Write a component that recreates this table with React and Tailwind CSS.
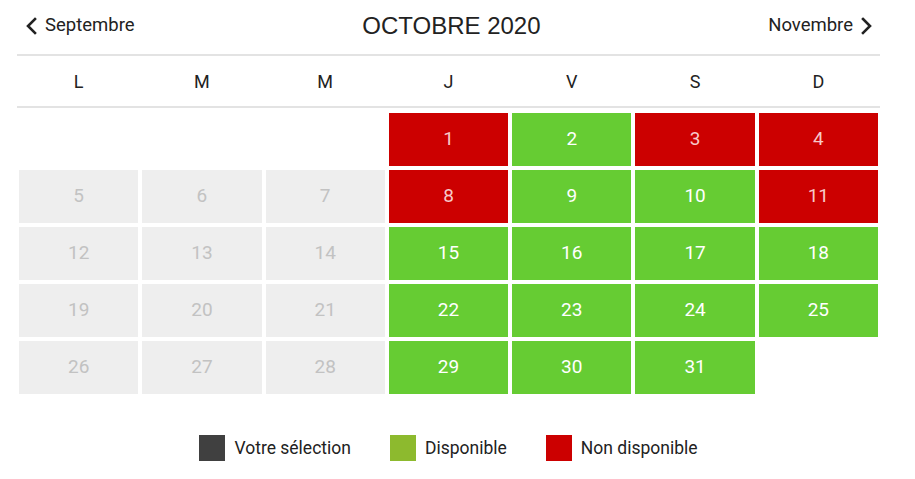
const days = ["L", "M", "M", "J", "V", "S", "D"];

// red = not available
const red = [1, 3, 4, 8, 11];

const cells = [];
for (let i = 0; i < 3; i++) cells.push({ day: null });
for (let d = 1; d <= 31; d++) {
    const col = (d + 2) % 7;
    let kind = "free";
    if (col < 3) kind = "past";
    if (red.includes(d)) kind = "busy";
    cells.push({ day: d, kind });
}

const Chevron = ({ left }) => (
    <svg width="12" height="18" viewBox="0 0 12 18" className="shrink-0">
        <polyline
            points={left ? "10,2 3,9 10,16" : "2,2 9,9 2,16"}
            fill="none"
            stroke="#222"
            strokeWidth="2.6"
            strokeLinecap="square"
        />
    </svg>
);

const Cell = ({ day, kind }) => {
    if (!day) return <div className="h-[53px] m-[2px]"></div>;
    const styles = {
        past: "bg-[#eeeeee] text-[#c2c2c2]",
        free: "bg-[#66cc33] text-white",
        busy: "bg-[#cc0000] text-[#f7c9c9]",
    };
    return (
        <div className={`h-[53px] m-[2px] flex items-center justify-center text-[19px] ${styles[kind]}`}>
            {day}
        </div>
    );
};

const App = () => {
    return (
        <div className="bg-white w-[915px] h-[479px]" style={{ fontFamily: "Roboto, 'Noto Sans', sans-serif" }}>
            <div className="ml-[17px] w-[863px]">
                {/* header */}
                <div className="flex items-center justify-between h-[54px] pl-[8px] pr-[7px] pt-[1px] pb-[4px]">
                    <div className="flex items-center gap-[8px] text-[18.5px] text-[#222]">
                        <Chevron left />
                        <span>Septembre</span>
                    </div>
                    <h1 className="text-[24px] text-[#222]" style={{ fontFamily: "'Liberation Sans', Arial, sans-serif" }}>
                        OCTOBRE 2020
                    </h1>
                    <div className="flex items-center gap-[8px] text-[18.5px] text-[#222]">
                        <span>Novembre</span>
                        <Chevron />
                    </div>
                </div>
                {/* week days */}
                <div className="grid grid-cols-7 border-y-2 border-[#e3e3e3] h-[54px] items-center">
                    {days.map((d, i) => (
                        <div key={i} className="text-center text-[18px] text-[#222]">{d}</div>
                    ))}
                </div>
                {/* days */}
                <div className="grid grid-cols-7 pt-[3px]">
                    {cells.map((c, i) => (
                        <Cell key={i} {...c} />
                    ))}
                </div>
                {/* legend */}
                <div className="flex justify-center items-center gap-[39px] mt-[39px] text-[17.5px] text-[#222]">
                    <div className="flex items-center gap-[9px]">
                        <span className="w-[26px] h-[26px] bg-[#404040]"></span>
                        <span>Votre sélection</span>
                    </div>
                    <div className="flex items-center gap-[9px]">
                        <span className="w-[26px] h-[26px] bg-[#8dba2e]"></span>
                        <span>Disponible</span>
                    </div>
                    <div className="flex items-center gap-[9px]">
                        <span className="w-[26px] h-[26px] bg-[#cc0000]"></span>
                        <span>Non disponible</span>
                    </div>
                </div>
            </div>
        </div>
    );
};

export default App;
